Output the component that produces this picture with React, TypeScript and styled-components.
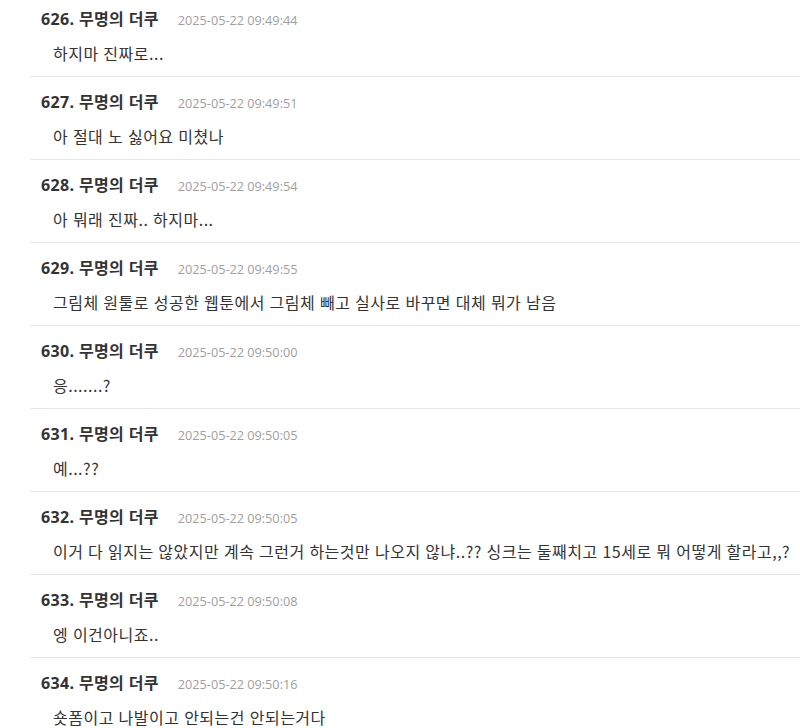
import React from "react";
import styled, { createGlobalStyle } from "styled-components";

const GlobalStyle = createGlobalStyle`
  html, body {
    margin: 0;
    padding: 0;
    background: #ffffff;
    overflow: hidden;
  }
  body {
    font-family: "Open Sans", "Noto Sans CJK KR", sans-serif;
    color: #333333;
  }
`;

const List = styled.div`
  margin: -6px 0 0 30px;
  display: flex;
  flex-direction: column;
`;

const Comment = styled.div`
  border-bottom: 1px solid #e6e6e6;
  padding: 15px 0 13px 11px;
  display: flex;
  flex-direction: column;
  gap: 14px;
`;

const Header = styled.div`
  display: flex;
  align-items: baseline;
  gap: 19px;
  height: 20px;
  line-height: 20px;
`;

const Author = styled.span`
  font-family: "Open Sans", "Noto Sans CJK KR", sans-serif;
  font-weight: 700;
  font-size: 16px;
  letter-spacing: 0.35px;
  color: #333333;
`;

const DateText = styled.span`
  font-family: "Open Sans", sans-serif;
  font-size: 12.7px;
  color: #a0a0a0;
`;

const Body = styled.div`
  padding-left: 12px;
  font-family: "Noto Sans CJK KR", sans-serif;
  font-size: 16px;
  letter-spacing: 0.5px;
  word-spacing: 0.6px;
  line-height: 20px;
  color: #333333;
  white-space: nowrap;
`;

const comments = [
  { no: 626, time: "2025-05-22 09:49:44", text: "하지마 진짜로..." },
  { no: 627, time: "2025-05-22 09:49:51", text: "아 절대 노 싫어요 미쳤나" },
  { no: 628, time: "2025-05-22 09:49:54", text: "아 뭐래 진짜.. 하지마..." },
  { no: 629, time: "2025-05-22 09:49:55", text: "그림체 원툴로 성공한 웹툰에서 그림체 빼고 실사로 바꾸면 대체 뭐가 남음" },
  { no: 630, time: "2025-05-22 09:50:00", text: "응.......?" },
  { no: 631, time: "2025-05-22 09:50:05", text: "예...??" },
  { no: 632, time: "2025-05-22 09:50:05", text: "이거 다 읽지는 않았지만 계속 그런거 하는것만 나오지 않냐..?? 싱크는 둘째치고 15세로 뭐 어떻게 할라고,,?" },
  { no: 633, time: "2025-05-22 09:50:08", text: "엥 이건아니죠.." },
  { no: 634, time: "2025-05-22 09:50:16", text: "숏폼이고 나발이고 안되는건 안되는거다" },
];

export default function App() {
  return (
    <>
      <GlobalStyle />
      <List>
        {comments.map((c) => (
          <Comment key={c.no}>
            <Header>
              <Author>{c.no}. 무명의 더쿠</Author>
              <DateText>{c.time}</DateText>
            </Header>
            <Body>{c.text}</Body>
          </Comment>
        ))}
      </List>
    </>
  );
}
